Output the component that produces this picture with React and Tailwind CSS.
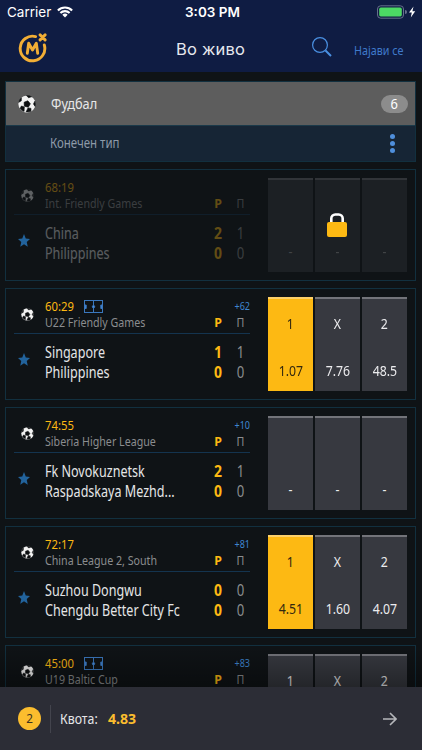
import React from 'react';
import clsx from 'clsx';

const matches = [
    { id: 1, time: '68:19', league: 'Int. Friendly Games', home: 'China', away: 'Philippines', score: [2, 0], half: [1, 0], locked: true },
    { id: 2, time: '60:29', league: 'U22 Friendly Games', home: 'Singapore', away: 'Philippines', score: [1, 0], half: [1, 0], more: '+62', pitch: true, odds: ['1.07', '7.76', '48.5'], selected: 0 },
    { id: 3, time: '74:55', league: 'Siberia Higher League', home: 'Fk Novokuznetsk', away: 'Raspadskaya Mezhd...', score: [2, 0], half: [1, 0], more: '+10' },
    { id: 4, time: '72:17', league: 'China League 2, South', home: 'Suzhou Dongwu', away: 'Chengdu Better City Fc', score: [0, 0], half: [0, 0], more: '+81', odds: ['4.51', '1.60', '4.07'], selected: 0 },
    { id: 5, time: '45:00', league: 'U19 Baltic Cup', home: '', away: '', score: ['', ''], half: ['', ''], more: '+83', pitch: true, odds: ['', '', ''] },
];

const Ball = ({ className }) => (
    <svg viewBox="0 0 24 24" className={className}>
        <circle cx="12" cy="12" r="11.5" fill="#f2f2f2" />
        <g fill="#0d0f11" stroke="#0d0f11" strokeWidth="0.8" transform="rotate(14 12 12)">
            <path d="M12 7.6l4.3 3.1-1.6 5H9.3l-1.6-5z" />
            <path d="M8.6 1.2L12 3.4l3.4-2.2a11.4 11.4 0 0 0-6.8 0z" />
            <path d="M21.4 5.8l-1 4 2.9 2.7a11.4 11.4 0 0 0-1.9-6.7z" />
            <path d="M19.4 20.2l-.8-3.8-4 .3-1.2 5.8a11.4 11.4 0 0 0 6-2.3z" />
            <path d="M4.6 20.2l.8-3.8 4 .3 1.2 5.8a11.4 11.4 0 0 1-6-2.3z" />
            <path d="M2.6 5.8l1 4-2.9 2.7a11.4 11.4 0 0 1 1.9-6.7z" />
        </g>
    </svg>
);

const Star = () => (
    <svg viewBox="0 0 24 24" className="h-[13px] w-[12px]" preserveAspectRatio="none">
        <path fill="#22639c" d="M12 0l3.5 8.2 8.5.8-6.5 5.8 2 8.8L12 19l-7.5 4.6 2-8.8L0 9l8.5-.8z" />
    </svg>
);

const Pitch = () => (
    <svg viewBox="0 0 20 13" className="h-[13px] w-[20px]" fill="none" stroke="#3a77bd">
        <rect x="0.5" y="0.5" width="18" height="12" />
        <path d="M9.5 1v11" />
        <path d="M0.8 5h1.4v3.5H0.8zM16.8 5h1.4v3.5h-1.4z" fill="#4a90e2" />
        <circle cx="9.5" cy="6.7" r="1.2" fill="#4a90e2" />
    </svg>
);

const Lock = () => (
    <svg viewBox="0 0 20 24" className="h-[24px] w-[20px]">
        <path d="M4.3 10V5.5a4 4 0 0 1 4-4h3.4a4 4 0 0 1 4 4V10" fill="none" stroke="#fff" strokeWidth="2.6" />
        <rect x="0" y="9" width="20" height="15" rx="2" fill="#fdb913" />
    </svg>
);

const Logo = () => (
    <svg viewBox="0 0 29 30" className="h-[30px] w-[29px]" fill="none" stroke="#f2ae35" strokeLinecap="round" strokeLinejoin="round">
        <path d="M17.6 3.6A12.3 12.3 0 1 0 26.3 12" strokeWidth="2.9" />
        <path d="M9.3 20.2l1.4-10 3.8 6.800 3.800-6.800 1.400 10" strokeWidth="2.9" />
        <path d="M22.1 1.9l5 5M27.1 1.9l-5 5" strokeWidth="2.9" />
    </svg>
);

const StatusBar = () => (
    <div className="flex h-6 items-center font-['Inter'] text-white">
        <span className="ml-[7px] w-[50px] text-[13.5px]">Carrier</span>
        <svg viewBox="0 0 16 12" className="h-[12px] w-[16px]" fill="none" stroke="#fff" strokeWidth="2.1">
            <path d="M0.9 4.4a10 10 0 0 1 14.2 0M3.4 7a6.5 6.5 0 0 1 9.2 0" />
            <path d="M5.3 8.8a3.8 3.8 0 0 1 5.4 0L8 11.6z" fill="#fff" stroke="none" />
        </svg>
        <span className="ml-[112px] w-[60px] whitespace-nowrap text-[13.5px] font-semibold">3:03 PM</span>
        <svg viewBox="0 0 40 14" className="ml-auto mr-[5px] h-[14px] w-[40px]">
            <rect x="0.5" y="0.8" width="26" height="12.4" rx="3.2" fill="none" stroke="#66708c" />
            <rect x="2.2" y="2.6" width="22.6" height="8.8" rx="1.6" fill="#4cd964" />
            <path d="M28 5v4a2 2 0 0 0 0-4z" fill="#66708c" />
            <path d="M36.5 1.6L32 7.6h2.8l-1 4.8 4.4-6.2h-2.8z" fill="#fff" />
        </svg>
    </div>
);

const Header = () => (
    <header className="h-[72px] shrink-0 bg-[#0f1c43]">
        <StatusBar />
        <div className="flex h-12 items-center">
            <div className="ml-[18px] w-[158px]">
                <Logo />
            </div>
            <h1 className="mt-[2px] w-[136px] whitespace-nowrap font-['Inter'] text-[16.5px] font-normal tracking-[0.2px] text-[#e6e8ee]">Во живо</h1>
            <svg viewBox="0 0 20 20" className="-mt-[3px] h-5 w-5" fill="none" stroke="#4a90e2">
                <circle cx="8" cy="8" r="7.4" strokeWidth="1.2" />
                <path d="M13.5 13.5l5.5 5.5" strokeWidth="2" />
            </svg>
            <span className="ml-[22px] mt-[6px] origin-left scale-x-[0.86] whitespace-nowrap text-[12.5px] text-[#3f7acb]">Најави се</span>
        </div>
    </header>
);

const OddCell = ({ label, value, active, locked }) => (
    <div className={clsx('flex h-[94px] w-[45px] flex-col items-center border-t-2', active ? 'border-[#fdd06a] bg-[#fdb913] text-[#33280f]' : 'border-[#73747a] bg-[#373940] text-[#ececee]')}>
        <span className="mt-[15px] h-[18px] scale-x-[0.82] text-[15px] leading-[18px]">{value !== '-' ? label : ''}</span>
        <span className={clsx('mt-[29px] scale-x-[0.82] text-[15px] leading-[18px]', locked && 'text-[#a0a0a0]')}>{value}</span>
    </div>
);

const Score = ({ main, half }) => (
    <div className="flex">
        <span className="w-[22px] scale-x-[0.9] text-center font-bold text-[#fdb913]">{main}</span>
        <span className="w-[23px] scale-x-[0.85] text-center text-[#8b8d8f]">{half}</span>
    </div>
);

const MatchCard = ({ match }) => {
    const odds = match.odds || ['-', '-', '-'];
    const dimmed = match.locked && 'opacity-35';

    return (
        <div className="relative mb-[7px] flex h-[112px] shrink-0 border border-[#12303f] pl-[8px]">
            <div className="w-[236px] shrink-0">
                <div className={clsx('flex h-[45px] border-b border-[#14344f]', dimmed)}>
                    <Ball className="ml-[7px] mt-[19px] h-[13px] w-[13px] shrink-0" />
                    <div className="ml-[11px] mt-[9px] w-[162px] shrink-0 whitespace-nowrap">
                        <div className="flex h-4 items-center">
                            <span className="w-[39px] origin-left scale-x-[0.87] text-[13px] leading-4 text-[#fdb913]">{match.time}</span>
                            {match.pitch && <Pitch />}
                        </div>
                        <div className="origin-left scale-x-[0.82] text-[13px] leading-4 text-[#8b8d8f]">{match.league}</div>
                    </div>
                    <div className="mt-[9px] w-[45px] shrink-0">
                        <div className="mr-[2px] h-4 origin-right scale-x-[0.86] text-right text-[10.5px] leading-4 text-[#3f86cf]">{match.more}</div>
                        <div className="flex text-[13px] leading-4">
                            <span className="w-[22px] scale-x-[0.95] text-center font-bold text-[#fdb913]">Р</span>
                            <span className="w-[23px] scale-x-[0.82] text-center text-[#8b8d8f]">П</span>
                        </div>
                    </div>
                </div>
                <div className="flex">
                    <div className="ml-[4px] mt-[19px] w-[13px] shrink-0">
                        <Star />
                    </div>
                    <div className={clsx('ml-[14px] mt-[8px] w-[162px] shrink-0 whitespace-nowrap text-[15.5px] leading-[20px] text-[#e4e5e6]', dimmed)}>
                        <div className="origin-left scale-x-[0.81]">{match.home}</div>
                        <div className="origin-left scale-x-[0.81]">{match.away}</div>
                    </div>
                    <div className={clsx('mt-[8px] shrink-0 text-[15.5px] leading-[20px]', dimmed)}>
                        <Score main={match.score[0]} half={match.half[0]} />
                        <Score main={match.score[1]} half={match.half[1]} />
                    </div>
                </div>
            </div>
            <div className={clsx('ml-[18px] mt-[8px] flex gap-[2px]', dimmed)}>
                {['1', 'X', '2'].map((label, i) => (
                    <OddCell key={label} label={label} value={odds[i]} active={match.selected === i} locked={match.locked} />
                ))}
            </div>
            {match.locked && (
                <div className="absolute left-[321px] top-[43px]">
                    <Lock />
                </div>
            )}
        </div>
    );
};

const BetSlipBar = () => (
    <footer className="flex h-[63px] shrink-0 items-center bg-[#2c2d36]">
        <div className="ml-[18px] flex h-[23px] w-[23px] items-center justify-center rounded-full bg-[#fbbd2e] text-[13px] text-[#3a3220]">
            <span className="scale-x-[0.9]">2</span>
        </div>
        <div className="ml-[9px] h-[28px] w-px bg-[#43444d]" />
        <span className="ml-[9px] w-[48px] origin-left scale-x-[0.85] whitespace-nowrap text-[14.5px] text-[#e6e6e8]">Квота:</span>
        <span className="origin-left scale-x-[0.94] text-[15px] font-bold text-[#fbbd2e]">4.83</span>
        <svg viewBox="0 0 14 14" className="ml-auto mr-[25px] h-[14px] w-[14px]" fill="none" stroke="#b5b6ba" strokeWidth="1.6">
            <path d="M0 7h13M7 1l6 6-6 6" />
        </svg>
    </footer>
);

const App = () => (
    <div className="flex h-[750px] w-[422px] flex-col overflow-hidden bg-[#0f1316] font-['Noto_Sans','Open_Sans',sans-serif]">
        <Header />
        <main className="relative min-h-0 flex-1 overflow-hidden pl-[5px] pr-[6px] pt-[9px]">
            <div className="mb-[7px] h-[81px] border border-[#12303f]">
                <div className="flex h-[44px] items-center border-b border-[#1b3a4a] bg-[#5d5d5d]">
                    <Ball className="ml-[12px] h-[18px] w-[18px]" />
                    <span className="ml-[15px] origin-left scale-x-[0.85] text-[15px] text-[#e8e8e8]">Фудбал</span>
                    <span className="ml-auto mr-[7px] flex h-[18px] w-[27px] items-center justify-center rounded-full bg-[#8c8c8c] text-[15px] text-white">
                        <span className="scale-x-[0.86]">6</span>
                    </span>
                </div>
                <div className="flex h-[35px] items-center bg-[#162535]">
                    <span className="ml-[44px] origin-left scale-x-[0.85] whitespace-nowrap text-[13.5px] text-[#8e9aa8]">Конечен тип</span>
                    <div className="ml-auto mr-[20px] flex flex-col gap-[2px]">
                        <i className="h-[5px] w-[5px] rounded-full bg-[#4f8fdc]" />
                        <i className="h-[5px] w-[5px] rounded-full bg-[#4f8fdc]" />
                        <i className="h-[5px] w-[5px] rounded-full bg-[#4f8fdc]" />
                    </div>
                </div>
            </div>
            {matches.map((match) => (
                <MatchCard key={match.id} match={match} />
            ))}
            <div className="absolute inset-x-0 bottom-0 h-[40px] bg-gradient-to-b from-transparent to-black/35" />
        </main>
        <BetSlipBar />
    </div>
);

export default App;
